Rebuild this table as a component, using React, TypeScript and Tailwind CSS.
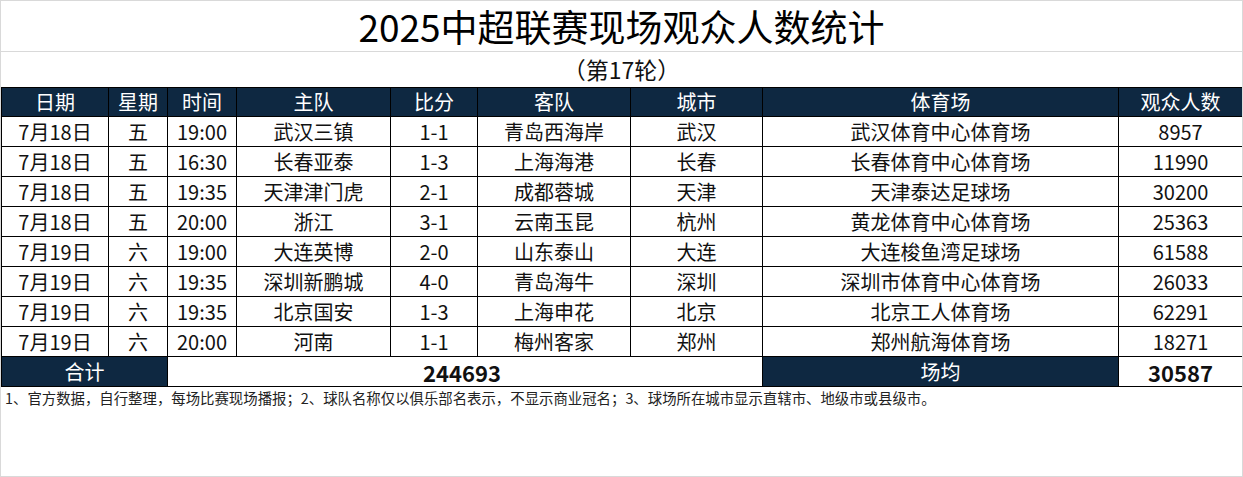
import React from "react";

const rows = [
  ["7月18日", "五", "19:00", "武汉三镇", "1-1", "青岛西海岸", "武汉", "武汉体育中心体育场", "8957"],
  ["7月18日", "五", "16:30", "长春亚泰", "1-3", "上海海港", "长春", "长春体育中心体育场", "11990"],
  ["7月18日", "五", "19:35", "天津津门虎", "2-1", "成都蓉城", "天津", "天津泰达足球场", "30200"],
  ["7月18日", "五", "20:00", "浙江", "3-1", "云南玉昆", "杭州", "黄龙体育中心体育场", "25363"],
  ["7月19日", "六", "19:00", "大连英博", "2-0", "山东泰山", "大连", "大连梭鱼湾足球场", "61588"],
  ["7月19日", "六", "19:35", "深圳新鹏城", "4-0", "青岛海牛", "深圳", "深圳市体育中心体育场", "26033"],
  ["7月19日", "六", "19:35", "北京国安", "1-3", "上海申花", "北京", "北京工人体育场", "62291"],
  ["7月19日", "六", "20:00", "河南", "1-1", "梅州客家", "郑州", "郑州航海体育场", "18271"],
];

const headers = ["日期", "星期", "时间", "主队", "比分", "客队", "城市", "体育场", "观众人数"];
const widths = [107, 59, 69, 154, 87, 153, 132, 356, 124];

export default function App() {
  return (
    <div
      className="w-[1243px] h-[477px] bg-white border border-[#d9d9d9] text-[#111] overflow-hidden"
      style={{ fontFamily: '"Noto Sans CJK SC", "Noto Sans", sans-serif' }}
    >
      <div className="h-[51px] border-b border-[#d9d9d9] flex items-center justify-center text-[37px] leading-none text-black">
        2025中超联赛现场观众人数统计
      </div>
      <div className="h-[35px] flex items-center justify-center text-[23px] leading-none">
        （第17轮）
      </div>
      <table className="table-fixed border-collapse w-[1241px] text-[20px] leading-none">
        <colgroup>
          {widths.map((w, i) => (
            <col key={i} style={{ width: w }} />
          ))}
        </colgroup>
        <thead>
          <tr className="h-[29px] bg-[#0e2841] text-white">
            {headers.map((h) => (
              <th key={h} className="border border-black font-normal text-center p-0">
                {h}
              </th>
            ))}
          </tr>
        </thead>
        <tbody>
          {rows.map((r, i) => (
            <tr key={i} className="h-[30px]">
              {r.map((c, j) => (
                <td key={j} className="border border-black text-center p-0">
                  {c}
                </td>
              ))}
            </tr>
          ))}
          <tr className="h-[30px]">
            <td colSpan={2} className="border border-black bg-[#0e2841] text-white text-center p-0">
              合计
            </td>
            <td colSpan={5} className="border border-black text-center p-0 font-bold text-[22px] pr-[6px]">
              244693
            </td>
            <td className="border border-black bg-[#0e2841] text-white text-center p-0">场均</td>
            <td className="border border-black text-center p-0 font-bold text-[22px]">30587</td>
          </tr>
        </tbody>
      </table>
      <div className="pl-[4px] pt-[2px] text-[14.4px] leading-[18px] text-[#222]">
        1、官方数据，自行整理，每场比赛现场播报；2、球队名称仅以俱乐部名表示，不显示商业冠名；3、球场所在城市显示直辖市、地级市或县级市。
      </div>
    </div>
  );
}
